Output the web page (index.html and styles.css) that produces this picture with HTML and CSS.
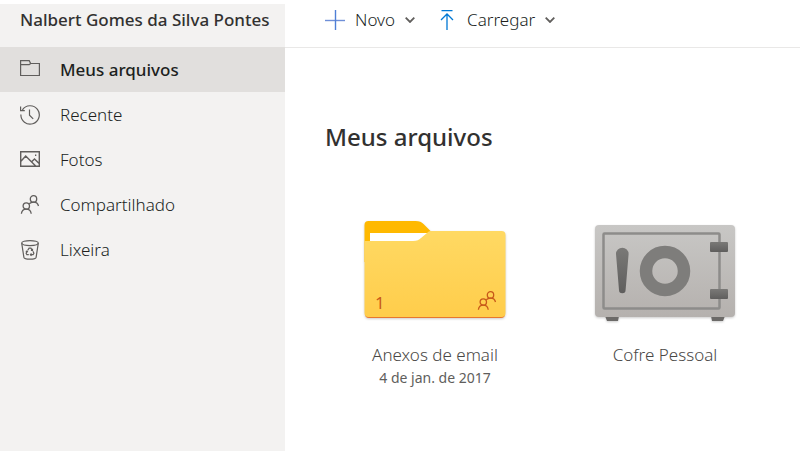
FILE: index.html
```html
<!DOCTYPE html>
<html lang="pt-BR">
<head>
    <meta charset="UTF-8">
    <meta name="viewport" content="width=device-width, initial-scale=1.0">
    <title>Meus arquivos</title>
    <link rel="stylesheet" href="styles.css">
</head>
<body>
    <!-- Person pair, used in the menu and on shared folders -->
    <svg class="symbols" aria-hidden="true">
        <symbol id="people" viewBox="0 0 20 20">
            <g fill="none" stroke="currentColor" stroke-width="1.3">
                <circle cx="13.5" cy="3.9" r="3.2"/>
                <path d="M9.2 8.8c1.2-1.2 2.7-1.7 4.3-1.7 2.6 0 4.5 1.6 5 3.9"/>
                <circle cx="6.3" cy="11" r="3.2"/>
                <path d="M1.4 18.8c.3-2.7 2.4-4.6 4.9-4.6s4.6 1.9 4.9 4.6"/>
            </g>
        </symbol>
    </svg>

    <div class="app">
        <aside class="sidebar">
            <div class="account">Nalbert Gomes da Silva Pontes</div>
            <nav class="menu">
                <a href="#" class="menu-item active" aria-current="page">
                    <svg class="menu-icon" viewBox="0 0 20 20" fill="none" stroke="currentColor" stroke-width="1.2">
                        <path d="M.6 15.5V.6h8.6l1.5 2.9h8.7v12zM.6 4.6h8.6l1.5-1.1"/>
                    </svg>
                    Meus arquivos
                </a>
                <a href="#" class="menu-item">
                    <svg class="menu-icon" viewBox="0 0 20 20" fill="none" stroke="currentColor" stroke-width="1.2">
                        <path d="M2.4 4.9A9.2 9.2 0 1 1 .9 9.5M.6 1.5v4.2h4.2M9.5 4.5v5.7l3.7 3.7"/>
                    </svg>
                    Recente
                </a>
                <a href="#" class="menu-item">
                    <svg class="menu-icon" viewBox="0 0 20 20" fill="none" stroke="currentColor" stroke-width="1.4">
                        <path d="M.7 1.7h18.6v14.6H.7zM.7 11.5l5-5.4 10.2 10.2M11.4 12l3.1-3.1 4.9 4.9"/>
                        <path d="M15 5.3h1.3"/>
                    </svg>
                    Fotos
                </a>
                <a href="#" class="menu-item">
                    <svg class="menu-icon"><use href="#people"/></svg>
                    Compartilhado
                </a>
                <a href="#" class="menu-item">
                    <svg class="menu-icon" viewBox="0 0 20 20" fill="none" stroke="currentColor" stroke-width="1.2">
                        <ellipse cx="10" cy="3.1" rx="8.3" ry="2.5"/>
                        <path d="M1.7 3.1l2.2 14.3c.2 1 2.8 1.8 6.1 1.8s5.9-.8 6.1-1.8l2.2-14.3"/>
                        <path d="M7.8 10.2l1.3-2h1.8l1.3 2M12.9 11.3l1 1.9-.8 1.5h-2.6M8.800 14.700H6.900l-.8-1.500.9-1.800M5.800 11.600l1.300-.5.700 1.200M12.500 8.700v1.700h-1.600M11.500 13.500l-1.100 1.200 1.100 1.200"/>
                    </svg>
                    Lixeira
                </a>
            </nav>
        </aside>

        <main class="content">
            <div class="toolbar">
                <button type="button" class="command">
                    <svg class="command-icon" viewBox="0 0 20 20" fill="none" stroke-width="1.4">
                        <path stroke="#6f8fd8" d="M0 10.5h20"/>
                        <path stroke="#4f7fd6" d="M10.5 0v20"/>
                    </svg>
                    Novo
                    <svg class="chevron" viewBox="0 0 10 6"><path d="M.7.7L5 5 9.3.7"/></svg>
                </button>
                <button type="button" class="command">
                    <svg class="command-icon" viewBox="0 0 20 20" fill="none" stroke="#0078d4" stroke-width="1.3">
                        <path d="M4.5.6h11M10 20V4.2M4 10l6-6 6 6"/>
                    </svg>
                    Carregar
                    <svg class="chevron" viewBox="0 0 10 6"><path d="M.7.7L5 5 9.3.7"/></svg>
                </button>
            </div>

            <h1 class="title">Meus arquivos</h1>

            <div class="tiles">
                <a href="#" class="tile">
                    <span class="cover">
                        <svg class="tile-art" viewBox="0 0 150 106">
                            <defs>
                                <linearGradient id="folder-front" x1="0" y1="0" x2="0" y2="1">
                                    <stop offset="0" stop-color="#ffd963"/>
                                    <stop offset="1" stop-color="#ffcd4b"/>
                                </linearGradient>
                            </defs>
                            <path class="folder-back" d="M4.5 8a4 4 0 0 1 4-4h47c4 0 6 1 8 3l8 8v30h-67z"/>
                            <path fill="#fff" d="M10 16h60v20H10z"/>
                            <path fill="#e8772e" d="M5 60h140v37a4 4 0 0 1-4 4H9a4 4 0 0 1-4-4z"/>
                            <path fill="url(#folder-front)" d="M4.5 24H53c4 0 6-1 8-3l6-5c2-2 3-2 5-2h69.5a4 4 0 0 1 4 4v78a4 4 0 0 1-4 4h-133a4 4 0 0 1-4-4z"/>
                        </svg>
                        <span class="count">1</span>
                        <svg class="shared"><use href="#people"/></svg>
                    </span>
                    <span class="name">Anexos de email</span>
                    <span class="date">4 de jan. de 2017</span>
                </a>
                <a href="#" class="tile">
                    <span class="cover">
                        <svg class="tile-art" viewBox="0 0 150 106">
                            <defs>
                                <linearGradient id="safe-body" x1="0" y1="0" x2="0" y2="1">
                                    <stop offset="0" stop-color="#c8c7c5"/>
                                    <stop offset="1" stop-color="#b5b1ae"/>
                                </linearGradient>
                                <linearGradient id="safe-part" x1="0" y1="0" x2="0" y2="1">
                                    <stop offset="0" stop-color="#7a7977"/>
                                    <stop offset="1" stop-color="#5f5e5d"/>
                                </linearGradient>
                            </defs>
                            <path fill="#6c6a68" d="M15 99h14l-1 5H17zM121 99h14l-2 5h-11z"/>
                            <rect x="5" y="8" width="140" height="92" rx="4" fill="url(#safe-body)"/>
                            <rect x="13.5" y="16.5" width="116" height="75" rx="1" fill="none" stroke="#8d8c8a" stroke-width="2.5"/>
                            <circle cx="75" cy="54" r="19" fill="none" stroke="#7e7d7b" stroke-width="12.5"/>
                            <path fill="url(#safe-part)" d="M26 37a6.3 6.3 0 0 1 12.6 0l-3 36a3.3 3.3 0 0 1-6.6 0z"/>
                            <rect x="120" y="25" width="18" height="10" rx="1" fill="url(#safe-part)"/>
                            <rect x="120" y="72" width="18" height="10" rx="1" fill="url(#safe-part)"/>
                        </svg>
                    </span>
                    <span class="name">Cofre Pessoal</span>
                </a>
            </div>
        </main>
    </div>
</body>
</html>
```

FILE: styles.css
```css
* {
    box-sizing: border-box;
}

body {
    margin: 0;
    padding-top: 4px;
    background-color: #fff;
    color: #323130;
    font-family: "Noto Sans", "Open Sans", sans-serif;
    font-size: 17px;
    line-height: 24px;
}

a {
    color: inherit;
    text-decoration: none;
}

.symbols {
    display: none;
}

.app {
    display: flex;
    min-height: calc(100vh - 4px);
}

/* Left navigation */
.sidebar {
    flex: 0 0 285px;
    min-width: 0;
    background-color: #f3f2f1;
}

.account {
    height: 43px;
    padding: 4px 20px;
    font-weight: 500;
    white-space: nowrap;
}

.menu-item {
    display: flex;
    align-items: center;
    gap: 20px;
    height: 45px;
    padding: 0 20px;
    color: #201f1e;
    font-weight: 300;
}

.menu-item:hover {
    background-color: #edebe9;
}

.menu-item.active {
    background-color: #e1dfdd;
    font-weight: 500;
}

.menu-icon {
    width: 20px;
    height: 20px;
    color: #605e5c;
}

/* Main area */
.content {
    flex: 1;
    min-width: 0;
}

.toolbar {
    display: flex;
    gap: 22px;
    height: 44px;
    padding: 0 40px 11px;
    border-bottom: 1px solid #e9e8e7;
}

.command {
    display: flex;
    align-items: center;
    gap: 10px;
    padding: 0;
    border: 0;
    background: none;
    color: #201f1e;
    font: inherit;
    font-weight: 300;
    cursor: pointer;
}

.command-icon {
    width: 20px;
    height: 20px;
}

.chevron {
    width: 10px;
    height: 6px;
    fill: none;
    stroke: #605e5c;
    stroke-width: 1.8;
}

.title {
    margin: 0;
    padding: 71px 40px 0;
    font-size: 24px;
    font-weight: 500;
    line-height: 36px;
}

.tiles {
    display: grid;
    grid-template-columns: repeat(auto-fill, 220px);
    gap: 10px;
    padding: 62px 20px 20px 40px;
}

.tile {
    display: flex;
    flex-direction: column;
    align-items: center;
    color: #605e5c;
}

.cover {
    position: relative;
    width: 150px;
    height: 106px;
    margin-bottom: 20px;
}

.tile-art {
    display: block;
    width: 100%;
    height: 100%;
    filter: drop-shadow(0 1px 1px rgba(0, 0, 0, 0.2));
}

.folder-back {
    fill: #ffb900;
}

.count {
    position: absolute;
    left: 15px;
    bottom: 8px;
    color: #c8591a;
}

.shared {
    position: absolute;
    right: 13px;
    bottom: 12px;
    width: 20px;
    height: 20px;
    color: #c8591a;
}

.name {
    color: #4a4846;
    font-weight: 300;
}

.date {
    font-size: 14px;
    line-height: 22px;
}
```
